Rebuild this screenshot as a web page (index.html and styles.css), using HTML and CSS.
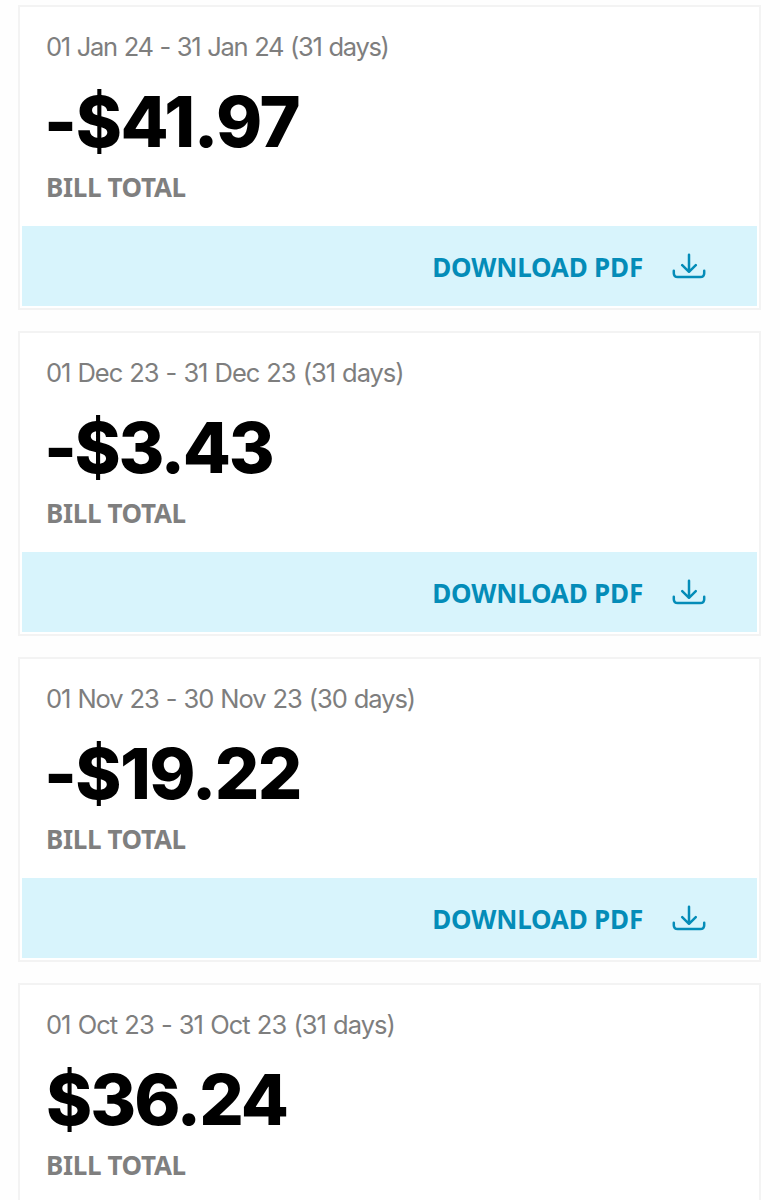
FILE: index.html
```
<!DOCTYPE html>
<html lang="en">
<head>
<meta charset="utf-8">
<title>Bills</title>
<link rel="stylesheet" href="styles.css">
</head>
<body>
<svg class="symbols" aria-hidden="true">
  <symbol id="download" viewBox="0 0 34 26">
    <path d="M17 1.8V18.5M10.2 12.2L17 18.8L23.8 12.2M1.8 17.8V20.2Q1.8 24 5.8 24H28.2Q32.2 24 32.2 20.2V17.8"/>
  </symbol>
</svg>
<main class="bills">
  <article class="bill jan">
    <div class="summary">
      <p class="period">01 Jan 24 - 31 Jan 24 (31 days)</p>
      <p class="amount credit">-$41.97</p>
      <p class="label">BILL TOTAL</p>
    </div>
    <a class="download"><span class="action">DOWNLOAD PDF</span><svg class="icon"><use href="#download"/></svg></a>
  </article>
  <article class="bill dec">
    <div class="summary">
      <p class="period">01 Dec 23 - 31 Dec 23 (31 days)</p>
      <p class="amount credit">-$3.43</p>
      <p class="label">BILL TOTAL</p>
    </div>
    <a class="download"><span class="action">DOWNLOAD PDF</span><svg class="icon"><use href="#download"/></svg></a>
  </article>
  <article class="bill nov">
    <div class="summary">
      <p class="period">01 Nov 23 - 30 Nov 23 (30 days)</p>
      <p class="amount credit">-$19.22</p>
      <p class="label">BILL TOTAL</p>
    </div>
    <a class="download"><span class="action">DOWNLOAD PDF</span><svg class="icon"><use href="#download"/></svg></a>
  </article>
  <article class="bill oct">
    <div class="summary">
      <p class="period">01 Oct 23 - 31 Oct 23 (31 days)</p>
      <p class="amount">$36.24</p>
      <p class="label">BILL TOTAL</p>
    </div>
  </article>
</main>
</body>
</html>
```
FILE: styles.css
```
* { box-sizing: border-box; }
body { margin: 0; height: 1200px; background: #fefefe; font-family: Inter, "Liberation Sans", sans-serif; }
p { margin: 0; white-space: nowrap; }
.symbols { display: none; }
.bills { height: 1200px; display: flex; flex-direction: column; gap: 21px; padding: 5px 19px 0 18px; }
.bill { height: 305px; flex: none; display: flex; flex-direction: column; justify-content: space-between; padding: 2px; border: 2px solid #f3f3f3; background: #fff; }
.bill:last-child { height: 217px; border-bottom: 0; padding-bottom: 0; }
.summary { padding: 22px 0 0 24px; }
.period { height: 32px; line-height: 32px; font-size: 25.5px; color: #7e7e7e; word-spacing: 1px; }
.jan .period { letter-spacing: -1.3px; }
.dec .period { letter-spacing: -1.05px; }
.nov .period { letter-spacing: -1.08px; }
.oct .period { letter-spacing: -0.98px; }
.amount { height: 96px; line-height: 86px; padding-top: 16px; font-size: 70px; font-weight: 800; color: #000; letter-spacing: -2px; }
.jan .amount { letter-spacing: -1.35px; }
.dec .amount { letter-spacing: -2.4px; }
.nov .amount { letter-spacing: -1.65px; }
.credit { margin-left: -2px; }
.label { height: 40px; line-height: 40px; padding-top: 8px; font-family: "Noto Sans", sans-serif; font-size: 26px; font-weight: 700; color: #7f7f7f; letter-spacing: -0.35px; }
.download { height: 80px; display: flex; align-items: center; justify-content: flex-end; gap: 29px; padding-right: 51px; background: #d8f4fc; color: #048cb8; }
.action { font-family: "Noto Sans", sans-serif; font-size: 26px; line-height: 36px; font-weight: 700; letter-spacing: -0.18px; padding-top: 1px; }
.icon { width: 34px; height: 26px; fill: none; stroke: currentColor; stroke-width: 2.5; stroke-linecap: round; stroke-linejoin: round; }
```
